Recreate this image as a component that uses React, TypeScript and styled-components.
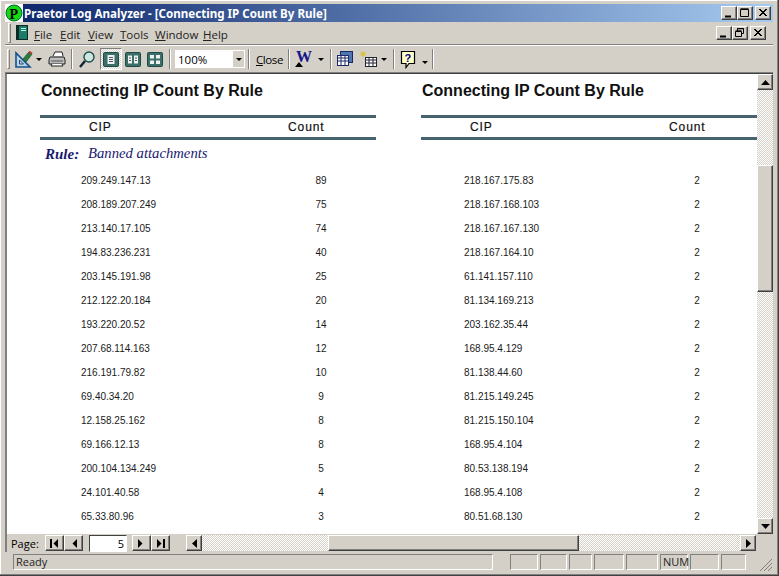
import styled, { createGlobalStyle, css } from "styled-components";

const face = "#d4d0c8";
const uiFont = `"Liberation Sans", Arial, sans-serif`;

const raised = css`
    border: 1px solid;
    border-color: #fff #404040 #404040 #fff;
    box-shadow: inset -1px -1px 0 #808080;
    background: ${face};
`;

const Global = createGlobalStyle`
    html, body { margin: 0; padding: 0; background: ${face}; }
    #root { width: 779px; height: 576px; overflow: hidden; }
`;

const Win = styled.div`
    box-sizing: border-box;
    width: 779px;
    height: 576px;
    padding: 4px 5px 3px 5px;
    display: flex;
    flex-direction: column;
    background: ${face};
    border-right: 1px solid #404040;
    border-bottom: 1px solid #404040;
    box-shadow: inset -1px -1px 0 #808080, inset 1px 1px 0 #fff;
    font-family: ${uiFont};
    font-size: 11px;
    color: #000;
`;

const TitleBar = styled.div`
    height: 18px;
    flex: none;
    display: flex;
    align-items: center;
    padding-right: 2px;
    background: linear-gradient(90deg, #0a246a, #a6caf0);
`;

const TitleText = styled.div`
    margin-left: 1px;
    color: #fff;
    font: bold 11.6px "Noto Sans", sans-serif;
    white-space: nowrap;
    flex: 1;
`;

const CapBtn = styled.div<{ $gap?: number }>`
    ${raised}
    box-sizing: border-box;
    width: 16px;
    height: 14px;
    margin-left: ${(p) => p.$gap ?? 0}px;
    display: flex;
    align-items: center;
    justify-content: center;
    flex: none;
`;

const MenuRow = styled.div`
    height: 22px;
    flex: none;
    display: flex;
    align-items: center;
    padding-left: 3px;
    padding-right: 7px;
    border-bottom: 1px solid #808080;
`;

const Grip = styled.div`
    width: 1px;
    height: 18px;
    margin-right: 2px;
    flex: none;
    border: 1px solid;
    border-color: #fff #808080 #808080 #fff;
`;

const MenuIcon = styled.svg`
    margin-left: 2px;
    margin-right: 5px;
    flex: none;
`;

const MenuItem = styled.span<{ $w: number }>`
    width: ${(p) => p.$w}px;
    flex: none;
    padding-top: 2px;
    font: 11.5px "Open Sans", sans-serif;
    color: #222;
`;

const Spacer = styled.div`
    flex: 1;
`;

const ToolRow = styled.div`
    height: 26px;
    flex: none;
    display: flex;
    align-items: center;
    padding-left: 2px;
    border-top: 1px solid #fff;
    border-bottom: 1px solid #808080;
`;

const ToolSep = styled.div<{ $l: number; $r: number }>`
    width: 0;
    height: 20px;
    flex: none;
    margin: 0 ${(p) => p.$r}px 0 ${(p) => p.$l}px;
    border-left: 1px solid #808080;
    border-right: 1px solid #fff;
`;

const ToolGlyph = styled.svg<{ $ml?: number }>`
    margin-left: ${(p) => p.$ml ?? 0}px;
    flex: none;
`;

const ToolIcon = styled.div<{ $on?: boolean; $w?: number; $ml?: number }>`
    box-sizing: border-box;
    width: ${(p) => p.$w ?? 20}px;
    height: 22px;
    margin-left: ${(p) => p.$ml ?? 0}px;
    flex: none;
    display: flex;
    align-items: center;
    justify-content: center;
    ${(p) =>
        p.$on &&
        css`
            border: 1px solid;
            border-color: #808080 #fff #fff #808080;
            background: repeating-conic-gradient(#fff 0 25%, ${face} 0 50%) 0 0 / 2px 2px;
        `}
`;

const Drop = styled.div<{ $ml?: number; $mt?: number }>`
    width: 0;
    height: 0;
    flex: none;
    margin-left: ${(p) => p.$ml ?? 3}px;
    margin-top: ${(p) => p.$mt ?? 0}px;
    border-left: 3px solid transparent;
    border-right: 3px solid transparent;
    border-top: 3px solid #000;
`;

const Combo = styled.div`
    box-sizing: border-box;
    width: 70px;
    height: 18px;
    flex: none;
    display: flex;
    align-items: center;
    padding-left: 3px;
    background: #fff;
    font: 11.5px "Open Sans", sans-serif;
`;

const ComboArrow = styled.div`
    width: 11px;
    height: 16px;
    margin-left: auto;
    margin-right: 1px;
    background: ${face};
    display: flex;
    align-items: center;
    justify-content: center;
`;

const CloseLabel = styled.span`
    width: 27px;
    margin-left: 4px;
    flex: none;
    font: 11.5px "Open Sans", sans-serif;
    letter-spacing: -0.4px;
`;

const Middle = styled.div`
    flex: 1;
    min-height: 0;
    display: flex;
    border-top: 1px solid #404040;
    border-left: 2px solid #808080;
`;

const Sheet = styled.div`
    flex: 1;
    min-width: 0;
    overflow: hidden;
    display: flex;
    background: #fff;
    padding-left: 33px;
`;

const Page = styled.section`
    flex: none;
    width: 336px;
    & + & {
        margin-left: 45px;
    }
`;

const Heading = styled.h2`
    margin: 7px 0 0 1px;
    height: 20px;
    font: bold 16px/20px "Liberation Sans", Arial, sans-serif;
    color: #111;
`;

const HeaderBand = styled.div`
    margin-top: 14px;
    height: 19px;
    display: flex;
    align-items: center;
    padding-bottom: 2px;
    box-sizing: content-box;
    height: 17px;
    border-top: 3px solid #47626f;
    border-bottom: 3px solid #47626f;
    font: 12px "Liberation Sans", Arial, sans-serif;
    letter-spacing: 0.9px;
    color: #111;
    -webkit-text-stroke: 0.2px #111;
`;

const HeadCip = styled.span`
    margin-left: 49px;
    width: 199px;
    flex: none;
`;

const RuleLine = styled.div`
    height: 28px;
    display: flex;
    align-items: center;
    padding-left: 5px;
    padding-bottom: 2px;
    box-sizing: border-box;
    color: #191970;
    font-family: "Liberation Serif", "Times New Roman", serif;
    font-style: italic;
    font-size: 14.7px;
`;

const RuleKey = styled.b`
    width: 43px;
    flex: none;
    font-size: 15px;
    position: relative;
    top: 1px;
`;

const Row = styled.div`
    height: 24px;
    display: flex;
    align-items: center;
    font: 10px "Liberation Sans", Arial, sans-serif;
    color: #1a1a1a;
`;

const IpCell = styled.span<{ $x: number; $w: number }>`
    margin-left: ${(p) => p.$x}px;
    width: ${(p) => p.$w}px;
    flex: none;
`;

const CountCell = styled.span`
    width: 30px;
    text-align: center;
    flex: none;
`;

const VBar = styled.div`
    width: 16px;
    flex: none;
    display: flex;
    flex-direction: column;
    background: repeating-conic-gradient(#fff 0 25%, ${face} 0 50%) 0 0 / 2px 2px;
`;

const ScrollBtn = styled.div<{ $w?: number; $h?: number; $ml?: number }>`
    ${raised}
    box-sizing: border-box;
    width: ${(p) => p.$w ?? 16}px;
    height: ${(p) => p.$h ?? 16}px;
    margin-left: ${(p) => p.$ml ?? 0}px;
    flex: none;
    display: flex;
    align-items: center;
    justify-content: center;
`;

const VThumb = styled.div`
    ${raised}
    box-sizing: border-box;
    height: 127px;
    margin-top: 75px;
    flex: none;
`;

const VFill = styled.div`
    flex: 1;
`;

const PageRow = styled.div`
    height: 18px;
    flex: none;
    display: flex;
    align-items: center;
    border-left: 2px solid #808080;
    padding-right: 17px;
`;

const PageLabel = styled.span`
    margin-left: 4px;
    width: 34px;
    flex: none;
    font: 11px "Open Sans", sans-serif;
`;

const NumBox = styled.div`
    box-sizing: border-box;
    width: 38px;
    height: 17px;
    margin: 0 5px 0 6px;
    flex: none;
    padding-right: 2px;
    text-align: right;
    background: #fff;
    border: 1px solid;
    border-color: #404040 #fff #fff #404040;
    font: 11px/15px "Open Sans", sans-serif;
`;

const HTrack = styled.div`
    flex: 1;
    height: 16px;
    display: flex;
    background: repeating-conic-gradient(#fff 0 25%, ${face} 0 50%) 0 0 / 2px 2px;
`;

const HThumb = styled.div`
    ${raised}
    box-sizing: border-box;
    width: 251px;
    margin-left: 126px;
`;

const StatusRow = styled.div`
    height: 20px;
    flex: none;
    display: flex;
    align-items: center;
    padding-left: 8px;
`;

const Panel = styled.div<{ $w: number; $ml?: number }>`
    box-sizing: border-box;
    width: ${(p) => p.$w}px;
    height: 16px;
    margin-left: ${(p) => p.$ml ?? 2}px;
    flex: none;
    padding-left: 2px;
    border: 1px solid;
    border-color: #808080 #fff #fff #808080;
    font: 11px/14px "Open Sans", sans-serif;
    color: #222;
`;

const SizeGrip = styled.svg`
    margin-left: auto;
    align-self: flex-end;
    flex: none;
`;

const ips: [string, number, string, number][] = [
    ["209.249.147.13", 89, "218.167.175.83", 2],
    ["208.189.207.249", 75, "218.167.168.103", 2],
    ["213.140.17.105", 74, "218.167.167.130", 2],
    ["194.83.236.231", 40, "218.167.164.10", 2],
    ["203.145.191.98", 25, "61.141.157.110", 2],
    ["212.122.20.184", 20, "81.134.169.213", 2],
    ["193.220.20.52", 14, "203.162.35.44", 2],
    ["207.68.114.163", 12, "168.95.4.129", 2],
    ["216.191.79.82", 10, "81.138.44.60", 2],
    ["69.40.34.20", 9, "81.215.149.245", 2],
    ["12.158.25.162", 8, "81.215.150.104", 2],
    ["69.166.12.13", 8, "168.95.4.104", 2],
    ["200.104.134.249", 5, "80.53.138.194", 2],
    ["24.101.40.58", 4, "168.95.4.108", 2],
    ["65.33.80.96", 3, "80.51.68.130", 2],
];

function Tri({ dir }: { dir: "u" | "d" | "l" | "r" }) {
    const pts = { u: "0,5 9,5 4.5,0", d: "0,0 9,0 4.5,5", l: "5,0 5,9 0,4.5", r: "0,0 0,9 5,4.5" }[dir];
    const horiz = dir === "l" || dir === "r";
    return (
        <svg width={horiz ? 5 : 9} height={horiz ? 9 : 5}>
            <polygon points={pts} fill="#000" />
        </svg>
    );
}

function NavBtn({ dir, bar }: { dir: "l" | "r"; bar?: boolean }) {
    return (
        <ScrollBtn $w={19} $h={16}>
            <svg width="11" height="9">
                {dir === "l" ? (
                    <>
                        {bar && <rect x="1" y="0" width="2" height="9" />}
                        <polygon points="9,0 9,9 4.5,4.5" />
                    </>
                ) : (
                    <>
                        <polygon points="2,0 2,9 6.5,4.5" />
                        {bar && <rect x="8" y="0" width="2" height="9" />}
                    </>
                )}
            </svg>
        </ScrollBtn>
    );
}

function Cap({ kind }: { kind: "min" | "max" | "restore" | "x" }) {
    return (
        <svg width="10" height="10" fill="none" stroke="#000">
            {kind === "min" && <rect x="1" y="7.5" width="6" height="2" fill="#000" stroke="none" />}
            {kind === "max" && <path d="M.5 1.5h8v7h-8zM.5.8h8" />}
            {kind === "restore" && <path d="M2.5 2.5v-2h6v5h-2M.5 3.5h6v5h-6zM.5 2.8h6M2.5.8h6" />}
            {kind === "x" && <path d="M1 1l7 7M8 1l-7 7M2 1l7 7M9 1l-7 7" />}
        </svg>
    );
}

function ViewIcon({ cols }: { cols: 1 | 2 | 4 }) {
    return (
        <svg width="16" height="15">
            <rect x="0" y="0" width="16" height="15" rx="2" fill="#1e4a48" />
            <rect x="1" y="1" width="14" height="13" rx="1" fill="#3d6f69" />
            {cols === 1 && (
                <>
                    <rect x="4.5" y="3" width="7" height="9" fill="#eef2f0" />
                    <path d="M6 5.5h4M6 7.5h4M6 9.5h4" stroke="#556" />
                </>
            )}
            {cols === 2 && (
                <>
                    <rect x="3" y="3.5" width="4" height="8" fill="#eef2f0" />
                    <rect x="9" y="3.5" width="4" height="8" fill="#eef2f0" />
                    <path d="M4 6h2M4 8.5h2M10 6h2M10 8.5h2" stroke="#556" />
                </>
            )}
            {cols === 4 && (
                <>
                    <rect x="3" y="3" width="4" height="3.5" fill="#eef2f0" />
                    <rect x="9" y="3" width="4" height="3.5" fill="#eef2f0" />
                    <rect x="3" y="8.5" width="4" height="3.5" fill="#eef2f0" />
                    <rect x="9" y="8.5" width="4" height="3.5" fill="#eef2f0" />
                </>
            )}
        </svg>
    );
}

function Report({ left, ipX, gap }: { left?: boolean; ipX: number; gap: number }) {
    return (
        <Page>
            <Heading>Connecting IP Count By Rule</Heading>
            <HeaderBand>
                <HeadCip>CIP</HeadCip>
                <span>Count</span>
            </HeaderBand>
            <RuleLine>
                {left && <RuleKey>Rule:</RuleKey>}
                {left && <span>Banned attachments</span>}
            </RuleLine>
            {ips.map((r) => (
                <Row key={r[0]}>
                    <IpCell $x={ipX} $w={gap}>
                        {left ? r[0] : r[2]}
                    </IpCell>
                    <CountCell>{left ? r[1] : r[3]}</CountCell>
                </Row>
            ))}
        </Page>
    );
}

export default function App() {
    return (
        <>
            <Global />
            <Win>
                <TitleBar>
                    <svg width="18" height="18">
                        <rect width="18" height="18" fill="#fff" />
                        <circle cx="9" cy="9" r="8" fill="#14d814" stroke="#063" />
                        <text x="4.5" y="14.5" fontSize="14" fontWeight="700" fontFamily="Liberation Serif" fill="#000">P</text>
                    </svg>
                    <TitleText>Praetor Log Analyzer - [Connecting IP Count By Rule]</TitleText>
                    <CapBtn><Cap kind="min" /></CapBtn>
                    <CapBtn><Cap kind="max" /></CapBtn>
                    <CapBtn $gap={2}><Cap kind="x" /></CapBtn>
                </TitleBar>
                <MenuRow>
                    <Grip />
                    <MenuIcon width="14" height="16">
                        <rect x="1.5" y=".5" width="11" height="14" fill="#1c7a68" stroke="#0b2a26" />
                        <rect x="1" y="1" width="3" height="14" fill="#0b2a26" />
                        <path d="M6 3.5h5M6 5.5h5" stroke="#bfe" />
                    </MenuIcon>
                    <MenuItem $w={26}><u>F</u>ile</MenuItem>
                    <MenuItem $w={28}><u>E</u>dit</MenuItem>
                    <MenuItem $w={32}><u>V</u>iew</MenuItem>
                    <MenuItem $w={35}><u>T</u>ools</MenuItem>
                    <MenuItem $w={48}><u>W</u>indow</MenuItem>
                    <MenuItem $w={26}><u>H</u>elp</MenuItem>
                    <Spacer />
                    <CapBtn><Cap kind="min" /></CapBtn>
                    <CapBtn><Cap kind="restore" /></CapBtn>
                    <CapBtn $gap={2}><Cap kind="x" /></CapBtn>
                </MenuRow>
                <ToolRow>
                    <Grip />
                    <ToolGlyph $ml={3} width="18" height="18" fill="none">
                        <path d="M1 17V3l14 14z" fill="#bcd4e4" stroke="#14508c" strokeWidth="1.6" />
                        <path d="M4.5 14V10l4 4z" fill={face} stroke="#14508c" />
                        <path d="M8 9l6-7 3 2-6 8z" fill="#2e7a3a" stroke="#264" />
                        <path d="M14 1.5l3 2" stroke="#c33" strokeWidth="2" />
                    </ToolGlyph>
                    <Drop $ml={3} />
                    <ToolGlyph $ml={6} width="18" height="16" fill="none" stroke="#222">
                        <path d="M5 5l2-4h7l1 4" fill="#fff" />
                        <path d="M2 6h14l1 3v4H1V9z" fill="#bdbdbd" />
                        <path d="M3 10h12" stroke="#555" />
                        <path d="M4 13l-1 2h12l-1-2" fill="#fff" />
                    </ToolGlyph>
                    <ToolSep $l={5} $r={6} />
                    <svg width="16" height="17" fill="none">
                        <circle cx="10" cy="6" r="5" fill="#cfe6e0" stroke="#1b4d4d" strokeWidth="1.4" />
                        <path d="M6 10l-5 6" stroke="#123" strokeWidth="2.4" />
                    </svg>
                    <ToolIcon $on $w={22} $ml={5}><ViewIcon cols={1} /></ToolIcon>
                    <ToolIcon $w={21}><ViewIcon cols={2} /></ToolIcon>
                    <ToolIcon $w={23}><ViewIcon cols={4} /></ToolIcon>
                    <ToolSep $l={3} $r={4} />
                    <Combo>
                        100%
                        <ComboArrow><Drop $ml={0} /></ComboArrow>
                    </Combo>
                    <ToolSep $l={3} $r={2} />
                    <CloseLabel><u>C</u>lose</CloseLabel>
                    <ToolSep $l={5} $r={4} />
                    <svg width="19" height="18">
                        <text x="2" y="12" fontSize="16" fontWeight="700" fontFamily="Liberation Serif" fill="#14148c">W</text>
                        <path d="M1 17l4-5 4 5z" fill="#000" />
                    </svg>
                    <Drop $ml={5} />
                    <ToolSep $l={6} $r={4} />
                    <svg width="18" height="16" fill="none" stroke="#1a2a66">
                        <rect x="4.5" y=".5" width="12" height="11" fill="#4f76b0" />
                        <rect x="1.5" y="4.5" width="11" height="10" fill="#fff" />
                        <path d="M1.5 7h11M1.5 10h11M5 4.5v10M9 4.5v10" />
                    </svg>
                    <ToolGlyph $ml={6} width="17" height="16" fill="none">
                        <path d="M3 0v6M0 3h6M1 1l4 4M5 1l-4 4" stroke="#d8c020" />
                        <rect x="5.5" y="6.5" width="11" height="9" fill="#fff" stroke="#223" />
                        <path d="M5.5 9h11M5.5 12h11M9 6.5v9M13 6.5v9" stroke="#223" />
                    </ToolGlyph>
                    <Drop $ml={4} />
                    <ToolSep $l={6} $r={5} />
                    <svg width="17" height="19" fill="none">
                        <path d="M1.5 1.5h13v12H9l-3 4v-4H1.5z" fill="#ffffc8" stroke="#000" strokeWidth="1.2" />
                        <text x="4.5" y="11.5" fontSize="11" fontWeight="700" fontFamily="Liberation Sans" fill="#000080">?</text>
                    </svg>
                    <Drop $ml={5} $mt={6} />
                    <ToolSep $l={4} $r={0} />
                </ToolRow>
                <Middle>
                    <Sheet>
                        <Report left ipX={41} gap={225} />
                        <Report ipX={43} gap={218} />
                    </Sheet>
                    <VBar>
                        <ScrollBtn><Tri dir="u" /></ScrollBtn>
                        <VThumb />
                        <VFill />
                        <ScrollBtn><Tri dir="d" /></ScrollBtn>
                    </VBar>
                </Middle>
                <PageRow>
                    <PageLabel>Page:</PageLabel>
                    <NavBtn dir="l" bar />
                    <NavBtn dir="l" />
                    <NumBox>5</NumBox>
                    <NavBtn dir="r" />
                    <NavBtn dir="r" bar />
                    <ScrollBtn $ml={16}><Tri dir="l" /></ScrollBtn>
                    <HTrack><HThumb /></HTrack>
                    <ScrollBtn><Tri dir="r" /></ScrollBtn>
                </PageRow>
                <StatusRow>
                    <Panel $w={480} $ml={0}>Ready</Panel>
                    <Panel $w={28} $ml={17} />
                    <Panel $w={27} />
                    <Panel $w={23} />
                    <Panel $w={30} />
                    <Panel $w={32} />
                    <Panel $w={28}>NUM</Panel>
                    <Panel $w={29} />
                    <Panel $w={25} />
                    <SizeGrip width="14" height="14" stroke="#808080">
                        <path d="M13 1L1 13M13 5L5 13M13 9l-4 4" />
                    </SizeGrip>
                </StatusRow>
            </Win>
        </>
    );
}
